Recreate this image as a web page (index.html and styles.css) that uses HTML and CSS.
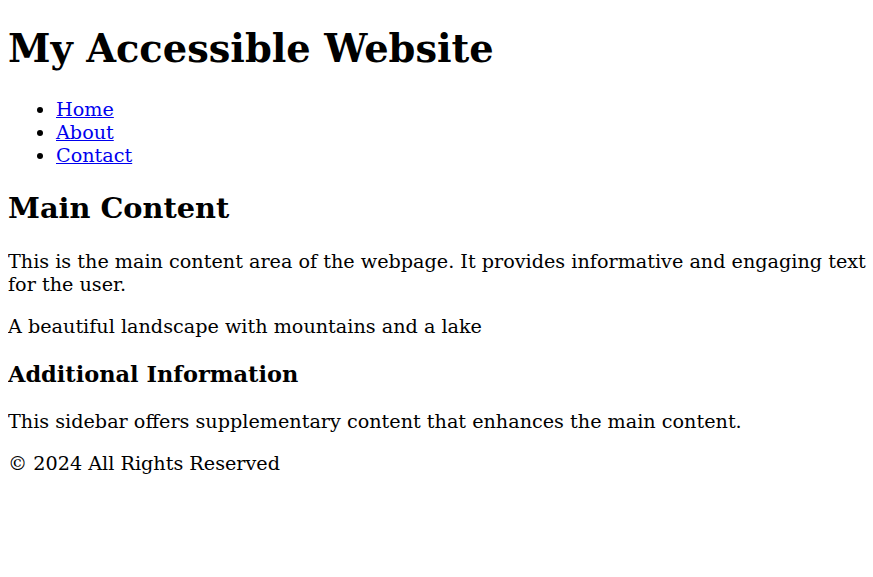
FILE: index.html
```html
<!DOCTYPE html>
<html lang="en">
<head>
<meta charset="utf-8">
<title>My Accessible Website</title>
<link rel="stylesheet" href="styles.css">
</head>
<body>
<header>
<h1>My Accessible Website</h1>
<nav>
<ul class="nav-list">
<li><a href="#">Home</a></li>
<li><a href="#">About</a></li>
<li><a href="#">Contact</a></li>
</ul>
</nav>
</header>
<main>
<h2>Main Content</h2>
<p>This is the main content area of the webpage. It provides informative and engaging text for the user.</p>
<p>A beautiful landscape with mountains and a lake</p>
</main>
<aside>
<h3>Additional Information</h3>
<p>This sidebar offers supplementary content that enhances the main content.</p>
</aside>
<footer>
<p>© 2024 All Rights Reserved</p>
</footer>
</body>
</html>
```
FILE: styles.css
```css
body {
  font-family: "DejaVu Serif", serif;
  font-size: 19.2px;
  line-height: 1.205;
  margin: 0 0 0 8px;
}
.nav-list {
  padding-left: 2.5em;
}
```
